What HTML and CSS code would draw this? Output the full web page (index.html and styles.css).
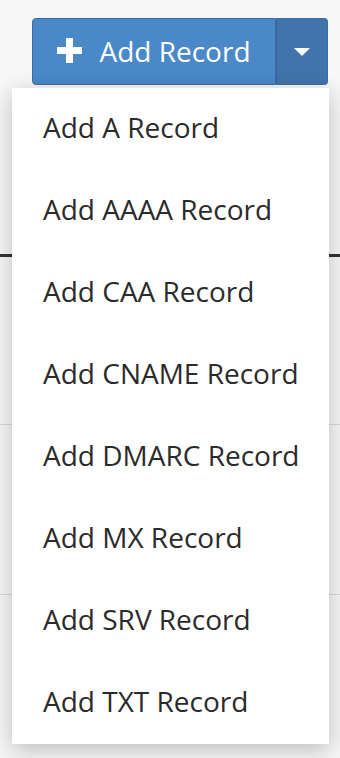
FILE: index.html
```html
<!DOCTYPE html>
<html lang="en">
<head>
    <meta charset="UTF-8">
    <meta name="viewport" content="width=device-width, initial-scale=1.0">
    <title>DNS Records</title>
    <link rel="stylesheet" href="styles.css">
</head>
<body>
    <div class="page">
        <div class="toolbar">
            <div class="btn-group">
                <button class="btn-main" type="button">
                    <svg class="plus" width="25" height="25" viewBox="0 0 25 25">
                        <path d="M9 0h7v9h9v7h-9v9h-7v-9h-9v-7h9z" fill="#fff"/>
                    </svg>
                    Add Record
                </button>
                <button class="btn-toggle" type="button">
                    <span class="caret"></span>
                </button>
                <ul class="menu">
                    <li>Add A Record</li>
                    <li>Add AAAA Record</li>
                    <li>Add CAA Record</li>
                    <li>Add CNAME Record</li>
                    <li>Add DMARC Record</li>
                    <li>Add MX Record</li>
                    <li>Add SRV Record</li>
                    <li>Add TXT Record</li>
                </ul>
            </div>
        </div>
        <div class="table">
            <div class="row head"></div>
            <div class="row"></div>
            <div class="row"></div>
            <div class="row"></div>
        </div>
    </div>
</body>
</html>
```

FILE: styles.css
```css
body {
    margin: 0;
    font-family: "Open Sans", sans-serif;
    background-color: #f7f7f7;
}

.page {
    width: 340px;
    height: 758px;
    overflow: hidden;
}

.toolbar {
    display: flex;
    justify-content: flex-end;
    padding: 18px 12px 0 0;
}

.btn-group {
    position: relative;
    display: flex;
}

.btn-main, .btn-toggle {
    height: 67px;
    border: 1px solid #3b6ea6;
    color: #fff;
    font-family: "Open Sans", sans-serif;
    cursor: pointer;
}

.btn-main {
    width: 244px;
    display: flex;
    align-items: center;
    justify-content: center;
    gap: 17px;
    padding: 0 0 2px 0;
    background-color: #4a88c8;
    border-radius: 4px 0 0 4px;
    font-size: 28px;
}

.btn-toggle {
    width: 52px;
    background-color: #4274ab;
    border-left-color: #36649a;
    border-radius: 0 4px 4px 0;
    display: flex;
    align-items: center;
    justify-content: center;
    padding: 0;
}

.caret {
    width: 0;
    height: 0;
    border-left: 8px solid transparent;
    border-right: 8px solid transparent;
    border-top: 8px solid #fff;
}

.menu {
    position: absolute;
    top: 70px;
    right: -1px;
    width: 317px;
    margin: 0;
    padding: 0;
    list-style: none;
    background-color: #fff;
    box-shadow: 0 6px 22px rgba(0, 0, 0, 0.24);
    z-index: 2;
}

.menu li {
    height: 82px;
    display: flex;
    align-items: center;
    padding: 0 0 4px 31px;
    box-sizing: border-box;
    font-size: 28px;
    color: #2b2b2b;
}

.table {
    margin-top: 169px;
}

.row {
    height: 169px;
    border-top: 1px solid #d9d9d9;
}

.row.head {
    border-top: 3px solid #333;
    height: 167px;
}
```
